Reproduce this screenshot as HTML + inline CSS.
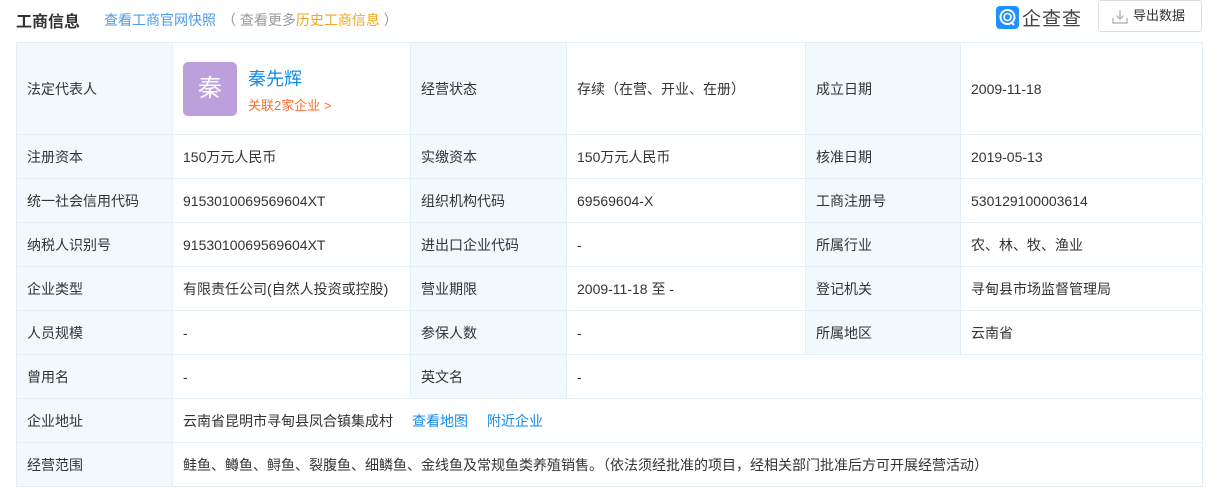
<!DOCTYPE html>
<html><head><meta charset="utf-8"><style>
*{margin:0;padding:0;box-sizing:border-box}
body{width:1217px;height:489px;background:#fff;font-family:"Liberation Sans","Noto Sans CJK SC",sans-serif;font-size:14px;color:#333;position:relative;overflow:hidden}
.title{position:absolute;left:16px;top:8px;font-size:16px;font-weight:bold;color:#333}
.l1{position:absolute;left:104px;top:10px;font-size:14px;color:#4a9be8}
.l2{position:absolute;left:222px;top:10px;font-size:14px;color:#999}
.l2 span{color:#f5a623}
.logo{position:absolute;left:996px;top:5px;height:24px;display:flex;align-items:center}
.logo .ic{width:23px;height:23px;background:#1e90ff;border-radius:4px;position:relative}
.logo .tx{font-size:19px;color:#444;margin-left:3px;letter-spacing:1px}
.btn{position:absolute;left:1098px;top:0;width:104px;height:32px;border:1px solid #ddd;border-radius:3px;font-size:13px;color:#333;line-height:30px;padding-left:34px}
table{position:absolute;left:16px;top:42px;border-collapse:collapse;table-layout:fixed;width:1186px}
td{border:1px solid #e4eef6;height:44px;padding:0 10px;vertical-align:middle;white-space:nowrap}
td.k{background:#f2f9fc}
.av{width:54px;height:54px;background:#bc9fdb;border-radius:5px;color:#fff;font-size:24px;text-align:center;line-height:54px;float:left;margin-right:11px}
a{color:#128bed;text-decoration:none}
</style></head><body>
<div class="title">工商信息</div>
<div class="l1">查看工商官网快照</div>
<div class="l2">（ 查看更多<span>历史工商信息</span> ）</div>
<div class="logo"><div class="ic"><svg width="23" height="23" viewBox="0 0 23 23"><circle cx="11.5" cy="11" r="7" fill="none" stroke="#fff" stroke-width="2"/><circle cx="11.5" cy="11" r="3.5" fill="none" stroke="#fff" stroke-width="1.6"/><path d="M15 16 L18 19" stroke="#fff" stroke-width="2"/></svg></div><div class="tx">企查查</div></div>
<div class="btn"><svg style="position:absolute;left:13px;top:8px" width="16" height="15" viewBox="0 0 16 15"><path d="M8 1v9M4.5 6.5L8 10l3.5-3.5M1 9v5h14V9" fill="none" stroke="#aaa" stroke-width="1.2"/></svg>导出数据</div>
<table>
<colgroup><col style="width:156px"><col style="width:238px"><col style="width:156px"><col style="width:239px"><col style="width:155px"><col style="width:242px"></colgroup>
<tr><td class="k" style="height:92px">法定代表人</td><td><div class="av">秦</div><div style="padding-top:5px"><div style="font-size:18px;color:#128bed;line-height:24px">秦先辉</div><div style="color:#fd6e2f;font-size:13px;margin-top:4px">关联2家企业 &gt;</div></div></td><td class="k">经营状态</td><td>存续（在营、开业、在册）</td><td class="k">成立日期</td><td>2009-11-18</td></tr>
<tr><td class="k">注册资本</td><td>150万元人民币</td><td class="k">实缴资本</td><td>150万元人民币</td><td class="k">核准日期</td><td>2019-05-13</td></tr>
<tr><td class="k">统一社会信用代码</td><td>9153010069569604XT</td><td class="k">组织机构代码</td><td>69569604-X</td><td class="k">工商注册号</td><td>530129100003614</td></tr>
<tr><td class="k">纳税人识别号</td><td>9153010069569604XT</td><td class="k">进出口企业代码</td><td>-</td><td class="k">所属行业</td><td>农、林、牧、渔业</td></tr>
<tr><td class="k">企业类型</td><td>有限责任公司(自然人投资或控股)</td><td class="k">营业期限</td><td>2009-11-18 至 -</td><td class="k">登记机关</td><td>寻甸县市场监督管理局</td></tr>
<tr><td class="k">人员规模</td><td>-</td><td class="k">参保人数</td><td>-</td><td class="k">所属地区</td><td>云南省</td></tr>
<tr><td class="k">曾用名</td><td>-</td><td class="k">英文名</td><td colspan="3">-</td></tr>
<tr><td class="k">企业地址</td><td colspan="5">云南省昆明市寻甸县凤合镇集成村<a style="margin-left:19px">查看地图</a><a style="margin-left:19px">附近企业</a></td></tr>
<tr><td class="k">经营范围</td><td colspan="5">鲑鱼、鳟鱼、鲟鱼、裂腹鱼、细鳞鱼、金线鱼及常规鱼类养殖销售。（依法须经批准的项目，经相关部门批准后方可开展经营活动）</td></tr>
</table>
</body></html>
